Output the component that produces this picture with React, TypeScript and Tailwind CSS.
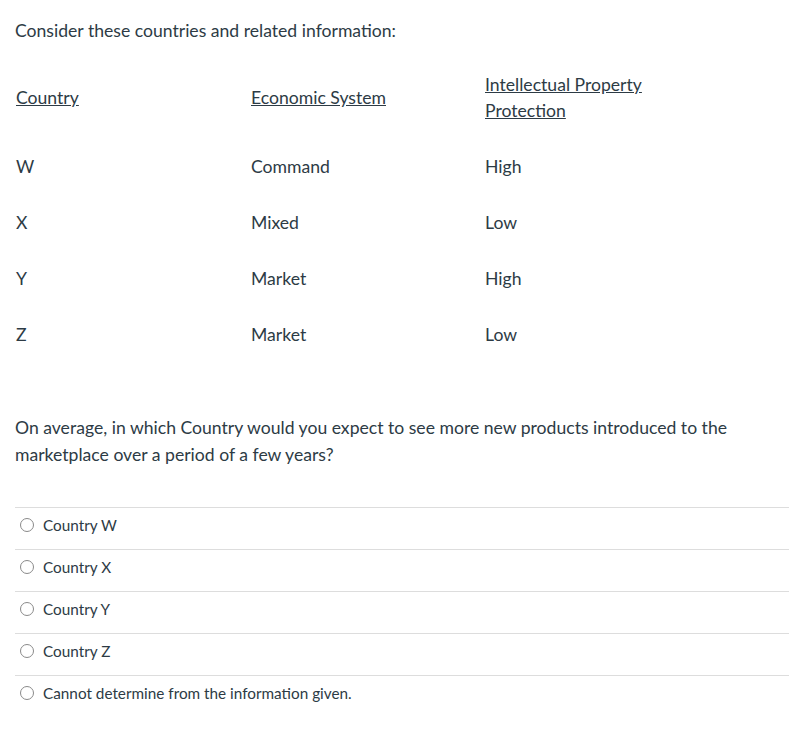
const rows = [
  { country: "W", system: "Command", ip: "High" },
  { country: "X", system: "Mixed", ip: "Low" },
  { country: "Y", system: "Market", ip: "High" },
  { country: "Z", system: "Market", ip: "Low" },
];

const answers = [
  "Country W",
  "Country X",
  "Country Y",
  "Country Z",
  "Cannot determine from the information given.",
];

export default function App() {
  return (
    <main className="min-h-screen bg-white pl-[15px] pr-[9px] pt-[18px] text-[#2d3b45] font-['Lato',sans-serif]">
      <p className="text-[17.6px] leading-[26px]">Consider these countries and related information:</p>

      <table className="mt-[13px] w-[703px] table-fixed border-collapse text-[17.6px] leading-[26px]">
        <thead>
          <tr>
            <th className="w-[235px] py-[15px] pl-px text-left align-middle font-normal underline">Country</th>
            <th className="w-[234px] py-[15px] pl-px text-left align-middle font-normal underline">Economic System</th>
            <th className="w-[234px] py-[15px] pl-px text-left align-middle font-normal underline">
              Intellectual Property Protection
            </th>
          </tr>
        </thead>
        <tbody>
          {rows.map((r) => (
            <tr key={r.country}>
              <td className="py-[15px] pl-px">{r.country}</td>
              <td className="py-[15px] pl-px">{r.system}</td>
              <td className="py-[15px] pl-px">{r.ip}</td>
            </tr>
          ))}
        </tbody>
      </table>

      <p className="mt-[51px] text-[17.6px] leading-[27px]">
        On average, in which Country would you expect to see more new products introduced to the
        marketplace over a period of a few years?
      </p>

      <div className="mt-[39px]">
        {answers.map((a) => (
          <label
            key={a}
            className="flex h-[42px] items-center gap-[9px] border-t border-[#dddddd] pb-[7px] pl-[5px] text-[15.3px]"
          >
            <span className="h-[14px] w-[14px] rounded-full border border-[#8a8a8a] bg-white" />
            <span>{a}</span>
          </label>
        ))}
      </div>
    </main>
  );
}
